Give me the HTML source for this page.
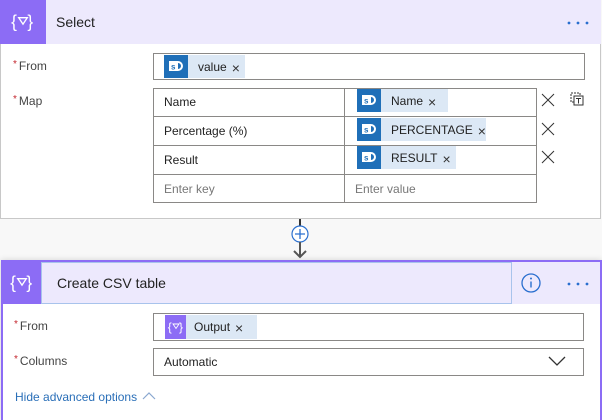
<!DOCTYPE html>
<html><head><meta charset="utf-8"><style>
*{box-sizing:border-box;margin:0;padding:0}
body{width:602px;height:420px;background:#f8f8f8;font-family:"Segoe UI","Liberation Sans",sans-serif;font-size:12px;color:#323130;position:relative;overflow:hidden}
.abs{position:absolute}
.card{position:absolute;background:#fff}
.hdr{position:absolute;background:#ede9fd}
.ico{position:absolute;background:#8c6cf5;color:#fff;display:flex;align-items:center;justify-content:center}
.lbl{position:absolute;font-size:12px;color:#444}
.lbl b{color:#c4262e;font-weight:normal;font-size:10px;vertical-align:top;margin-right:2px}
.box{position:absolute;border:1px solid #8a8886;background:#fff}
.chip{position:absolute;background:#dce8f5;height:23px;display:flex;align-items:center;font-size:12px;color:#222}
.sp{width:24px;height:23px;background:#1f6fb8;display:flex;align-items:center;justify-content:center;margin-right:10px}
.x{font-size:14px;margin-left:5px;color:#333;font-weight:normal;position:relative;top:1px}
.cell{position:absolute;font-size:12px;color:#222}
.ph{color:#777}
</style></head><body>
<svg width="0" height="0" style="position:absolute"><defs>
<symbol id="sp" viewBox="0 0 24 23"><rect x="5" y="6" width="9" height="10" fill="#fff"/><text x="7" y="14.5" font-size="8" font-family="Liberation Sans" fill="#1f6fb8" font-weight="bold">s</text><path d="M14 7 a4 4 0 0 1 0 8" stroke="#fff" stroke-width="2" fill="none"/></symbol>
<symbol id="fx" viewBox="0 0 24 24"><text x="1" y="17" font-size="16" fill="#fff" font-family="Liberation Sans">{</text><text x="16" y="17" font-size="16" fill="#fff" font-family="Liberation Sans">}</text><path d="M8 8h8l-4 6z" stroke="#fff" fill="none" stroke-width="1.2"/></symbol>
<symbol id="dots" viewBox="0 0 24 6"><circle cx="3" cy="3" r="1.4" fill="#2a6fcf"/><circle cx="12" cy="3" r="1.4" fill="#2a6fcf"/><circle cx="21" cy="3" r="1.4" fill="#2a6fcf"/></symbol>
</defs></svg>

<!-- card 1 -->
<div class="card" style="left:0;top:0;width:601px;height:219px;border:1px solid #c8c8c8;border-top:none"></div>
<div class="hdr" style="left:0;top:0;width:601px;height:44px"></div>
<div class="ico" style="left:0;top:0;width:46px;height:44px"><svg width="26" height="26"><use href="#fx"/></svg></div>
<div class="abs" style="left:56px;top:14px;font-size:14px;color:#222">Select</div>
<svg class="abs" style="left:566px;top:20px" width="24" height="6"><use href="#dots"/></svg>

<div class="lbl" style="left:13px;top:59px"><b>*</b>From</div>
<div class="box" style="left:153px;top:53px;width:432px;height:27px"></div>
<div class="chip" style="left:164px;top:55px;width:81px"><div class="sp"><svg width="24" height="23"><use href="#sp"/></svg></div>value<span class="x">×</span></div>

<div class="lbl" style="left:13px;top:94px"><b>*</b>Map</div>
<div class="box" style="left:153px;top:88px;width:384px;height:115px"></div>
<div class="abs" style="left:344px;top:88px;width:1px;height:115px;background:#8a8886"></div>
<div class="abs" style="left:153px;top:116px;width:384px;height:1px;background:#8a8886"></div>
<div class="abs" style="left:153px;top:145px;width:384px;height:1px;background:#8a8886"></div>
<div class="abs" style="left:153px;top:174px;width:384px;height:1px;background:#8a8886"></div>
<div class="cell" style="left:164px;top:95px">Name</div>
<div class="cell" style="left:164px;top:124px">Percentage (%)</div>
<div class="cell" style="left:164px;top:153px">Result</div>
<div class="cell ph" style="left:164px;top:182px">Enter key</div>
<div class="cell ph" style="left:355px;top:182px">Enter value</div>
<div class="chip" style="left:357px;top:89px;width:91px"><div class="sp"><svg width="24" height="23"><use href="#sp"/></svg></div>Name<span class="x">×</span></div>
<div class="chip" style="left:357px;top:118px;width:129px"><div class="sp"><svg width="24" height="23"><use href="#sp"/></svg></div>PERCENTAGE<span class="x">×</span></div>
<div class="chip" style="left:357px;top:146px;width:99px"><div class="sp"><svg width="24" height="23"><use href="#sp"/></svg></div>RESULT<span class="x">×</span></div>
<svg class="abs" style="left:541px;top:93px" width="14" height="90"><g stroke="#333" stroke-width="1"><path d="M1 1l12 12M13 1L1 13"/><path d="M1 30l12 12M13 30L1 42"/><path d="M1 58l12 12M13 58L1 70"/></g></svg>
<svg class="abs" style="left:570px;top:92px" width="14" height="14"><rect x="1" y="1" width="9" height="9" fill="none" stroke="#333" stroke-dasharray="2 1"/><rect x="4" y="4" width="9" height="9" fill="#fff" stroke="#333"/><path d="M6 6.5h5M8.5 6.5v5" stroke="#333"/></svg>

<!-- connector -->
<div class="abs" style="left:299px;top:219px;width:2px;height:8px;background:#333"></div>
<svg class="abs" style="left:290px;top:224px" width="22" height="36"><circle cx="10" cy="10" r="8" fill="#fff" stroke="#2a6fcf" stroke-width="1.2"/><path d="M10 5v10M5 10h10" stroke="#2a6fcf" stroke-width="1.3"/><path d="M10 18v15M4 27l6 6 6-6" stroke="#555" stroke-width="2" fill="none"/></svg>

<!-- card 2 -->
<div class="card" style="left:1px;top:260px;width:601px;height:160px;border:2px solid #8c6cf5;border-bottom:none;box-shadow:0 0 6px rgba(0,0,0,.15)"></div>
<div class="hdr" style="left:3px;top:262px;width:597px;height:42px"></div>
<div class="abs" style="left:41px;top:262px;width:471px;height:42px;border:1px solid #a8c3ec"></div>
<div class="ico" style="left:3px;top:262px;width:38px;height:42px"><svg width="26" height="26"><use href="#fx"/></svg></div>
<div class="abs" style="left:57px;top:275px;font-size:14px;color:#222">Create CSV table</div>
<svg class="abs" style="left:520px;top:272px" width="22" height="22"><circle cx="11" cy="11" r="9" fill="none" stroke="#2a6fcf" stroke-width="1.3"/><path d="M11 9.5v6" stroke="#2a6fcf" stroke-width="1.4"/><circle cx="11" cy="6.5" r="1" fill="#2a6fcf"/></svg>
<svg class="abs" style="left:566px;top:281px" width="24" height="6"><use href="#dots"/></svg>

<div class="lbl" style="left:14px;top:319px"><b>*</b>From</div>
<div class="box" style="left:153px;top:313px;width:431px;height:28px"></div>
<div class="chip" style="left:165px;top:315px;width:92px;height:24px"><div class="sp" style="background:#8c6cf5;width:21px;height:24px;margin-right:8px"><svg width="18" height="18"><use href="#fx"/></svg></div>Output<span class="x">×</span></div>

<div class="lbl" style="left:14px;top:354px"><b>*</b>Columns</div>
<div class="box" style="left:153px;top:348px;width:431px;height:28px"></div>
<div class="cell" style="left:164px;top:355px">Automatic</div>
<svg class="abs" style="left:548px;top:355px" width="18" height="12"><path d="M1 2l8 8 8-8" stroke="#333" stroke-width="1.3" fill="none"/></svg>

<div class="abs" style="left:15px;top:390px;color:#2a6fb8;font-size:12px">Hide advanced options</div>
<svg class="abs" style="left:142px;top:391px" width="14" height="10"><path d="M1 8l6-6 6 6" stroke="#8aa8d0" stroke-width="1.2" fill="none"/></svg>
</body></html>
